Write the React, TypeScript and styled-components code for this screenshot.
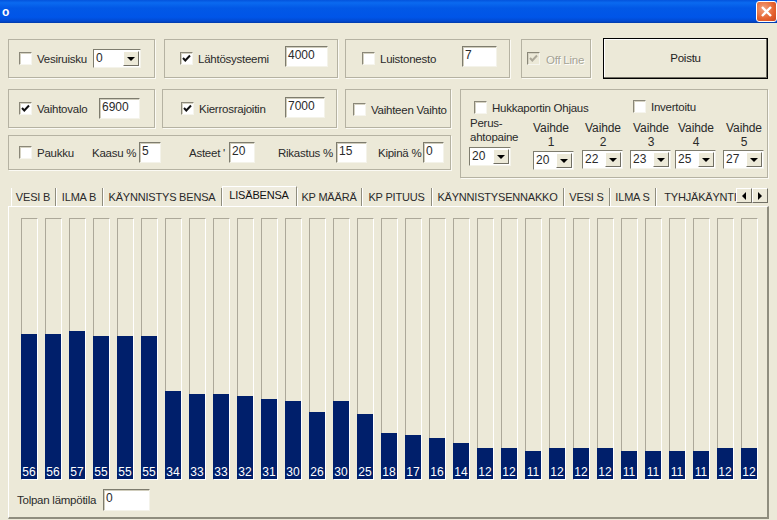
import React from 'react';
import styled, { createGlobalStyle } from 'styled-components';

const Global = createGlobalStyle`
	html, body {
		margin: 0;
		padding: 0;
		background: #ece9d8;
	}
	* {
		box-sizing: border-box;
	}
`

const Win = styled.div`
	width: 777px;
	height: 520px;
	overflow: hidden;
	background: #ece9d8;
	font-family: 'Liberation Sans', Arial, sans-serif;
	font-size: 11.5px;
	letter-spacing: -0.25px;
	color: #2a2a2a;
`
const TitleBar = styled.div`
	height: 23px;
	display: flex;
	align-items: center;
	justify-content: space-between;
	padding: 0 0 0 2px;
	background: linear-gradient(180deg, #0453dc 0%, #0a6af0 12%, #0258e6 35%, #0055e8 75%, #0249d0 92%, #013aa8 100%);
	color: #fff;
	font-weight: bold;
	font-size: 12px;
`
const CloseBtn = styled.div`
	width: 21px;
	height: 21px;
	margin-top: -1px;
	border: 1px solid #fff;
	border-radius: 3px;
	background: radial-gradient(circle at 35% 35%, #f2a27e, #e5622e 60%, #cc441c);
	display: flex;
	align-items: center;
	justify-content: center;
`
const Content = styled.div`
	padding: 16px 8px 0;
`
const Row = styled.div`
	display: flex;
	align-items: flex-start;
`
const Group = styled.div<{ $w: number; $h?: number; $ml?: number }>`
	width: ${p => p.$w}px;
	height: ${p => p.$h || 39}px;
	margin-left: ${p => p.$ml || 0}px;
	border: 1px solid #b5b2a2;
	box-shadow: 1px 1px 0 #fbfaf4;
	display: flex;
	align-items: center;
	flex-shrink: 0;
`
const Poistu = styled.button`
	width: 165px;
	height: 41px;
	margin-left: 12px;
	margin-top: -1px;
	background: #ece9d8;
	border: 1px solid #000;
	box-shadow: inset -1px -1px 0 #716f64, inset 1px 1px 0 #fff;
	font: inherit;
	letter-spacing: inherit;
	color: #222;
	padding: 0 0 2px;
`
const Check = styled.span<{ $off?: boolean; $ml: number; $mt?: number }>`
	width: 13px;
	height: 13px;
	margin-left: ${p => p.$ml}px;
	margin-top: ${p => p.$mt || 0}px;
	flex-shrink: 0;
	background: ${p => (p.$off ? '#ece9d8' : '#fff')};
	border-top: 1px solid #8a8778;
	border-left: 1px solid #8a8778;
	border-right: 1px solid #f6f5ee;
	border-bottom: 1px solid #f6f5ee;
	box-shadow: inset 1px 1px 0 #d6d3c3;
	display: flex;
	align-items: center;
	justify-content: center;
`
const Label = styled.span<{ $ml: number; $w?: number; $mt?: number; $off?: boolean }>`
	margin-left: ${p => p.$ml}px;
	margin-top: ${p => p.$mt || 0}px;
	${p => (p.$w ? `width: ${p.$w}px;` : '')}
	flex-shrink: 0;
	white-space: nowrap;
	color: ${p => (p.$off ? '#a5a394' : 'inherit')};
	${p => (p.$off ? 'text-shadow: 1px 1px 0 #fff;' : '')}
`
const Field = styled.div<{ $w: number; $h?: number; $ml: number; $mt?: number }>`
	width: ${p => p.$w}px;
	height: ${p => p.$h || 21}px;
	margin-left: ${p => p.$ml}px;
	margin-top: ${p => p.$mt || 0}px;
	flex-shrink: 0;
	background: #fff;
	border-top: 1px solid #7e7c6e;
	border-left: 1px solid #7e7c6e;
	border-right: 1px solid #f4f3ea;
	border-bottom: 1px solid #f4f3ea;
	box-shadow: inset 1px 1px 0 #d0cdbc;
	padding: 1px 0 0 2px;
	font-size: 12px;
	letter-spacing: 0;
	line-height: 14px;
`
const ComboBox = styled.div<{ $w: number; $ml?: number }>`
	width: ${p => p.$w}px;
	height: 19px;
	margin-left: ${p => p.$ml || 0}px;
	flex-shrink: 0;
	background: #fff;
	border-top: 1px solid #7e7c6e;
	border-left: 1px solid #7e7c6e;
	border-right: 1px solid #f4f3ea;
	border-bottom: 1px solid #f4f3ea;
	display: flex;
	justify-content: space-between;
	padding: 1px 1px 1px 2px;
	font-size: 12px;
	letter-spacing: 0;
	line-height: 15px;
`
const ComboBtn = styled.span`
	width: 16px;
	background: #ece9d8;
	border-right: 1px solid #716f64;
	border-bottom: 1px solid #716f64;
	border-top: 1px solid #fff;
	border-left: 1px solid #fff;
	display: flex;
	align-items: center;
	justify-content: center;
	&::after {
		content: '';
		border-left: 4px solid transparent;
		border-right: 4px solid transparent;
		border-top: 4px solid #000;
	}
`
const LowerRow = styled.div`
	display: flex;
	align-items: flex-start;
	margin-top: 10px;
`
const LeftStack = styled.div`
	display: flex;
	flex-direction: column;
	gap: 7px;
`
const BoostGroup = styled.div`
	width: 308px;
	height: 89px;
	margin-left: 9px;
	border: 1px solid #b5b2a2;
	box-shadow: 1px 1px 0 #fbfaf4;
	display: flex;
	flex-direction: column;
`
const BoostHead = styled.div`
	height: 29px;
	display: flex;
	align-items: center;
`
const BoostCols = styled.div`
	display: flex;
	padding-left: 8px;
`
const GearCol = styled.div<{ $w: number; $ml: number }>`
	width: ${p => p.$w}px;
	margin-left: ${p => p.$ml}px;
	display: flex;
	flex-direction: column;
	align-items: center;
	height: 50px;
	line-height: 14px;
	text-align: center;
	font-size: 12px;
	letter-spacing: -0.1px;
	flex-shrink: 0;
`
const BaseCol = styled(GearCol)`
	align-items: flex-start;
	text-align: left;
	margin-top: -3px;
	font-size: 11.5px;
	letter-spacing: -0.25px;
`
const GearText = styled.div<{ $drop?: number; $shift?: number }>`
	height: 31px;
	padding-top: 2px;
	padding-left: 1px;
	margin-bottom: ${p => p.$drop || 0}px;
	${p => (p.$shift ? `margin-left: ${p.$shift}px;` : '')}
`
const BaseText = styled(GearText)`
	padding-top: 0;
	height: 31px;
`
const TabStrip = styled.div`
	display: flex;
	align-items: flex-end;
	height: 20px;
	margin-top: 8px;
	padding-left: 3px;
`
const TabList = styled.div`
	width: 725px;
	height: 20px;
	display: flex;
	align-items: flex-end;
	overflow: hidden;
	flex-shrink: 0;
`
const Tab = styled.div<{ $w: number; $active?: boolean }>`
	width: ${p => p.$w}px;
	flex-shrink: 0;
	height: ${p => (p.$active ? 20 : 18)}px;
	display: flex;
	align-items: center;
	justify-content: center;
	white-space: nowrap;
	font-size: 11px;
	letter-spacing: -0.2px;
	line-height: 16px;
	background: ${p => (p.$active ? '#efecdf' : '#ece9d8')};
	border-right: 1px solid #8f8d7e;
	box-shadow: inset 1px 0 0 #fff;
	padding-bottom: ${p => (p.$active ? 3 : 0)}px;
	${p => (p.$active ? 'border-top: 1px solid #fff; color: #111;' : '')}
`
const ScrollBtn = styled.span<{ $dir: 'l' | 'r' }>`
	width: 16px;
	height: 15px;
	margin-bottom: 3px;
	flex-shrink: 0;
	background: #ece9d8;
	border-top: 1px solid #fff;
	border-left: 1px solid #fff;
	border-right: 1px solid #716f64;
	border-bottom: 1px solid #716f64;
	display: flex;
	align-items: center;
	justify-content: center;
	&::after {
		content: '';
		border-top: 4px solid transparent;
		border-bottom: 4px solid transparent;
		${p => (p.$dir === 'l' ? 'border-right: 4px solid #000;' : 'border-left: 4px solid #000;')}
	}
`
const Panel = styled.div`
	width: 761px;
	height: 313px;
	border-top: 1px solid #fff;
	border-left: 1px solid #fff;
	border-right: 2px solid #8f8d7e;
	border-bottom: 2px solid #8f8d7e;
	padding: 11px 0 0 12px;
`
const Bars = styled.div`
	display: flex;
	gap: 7px;
	height: 262px;
`
const Track = styled.div`
	width: 17px;
	height: 262px;
	display: flex;
	flex-direction: column;
	justify-content: flex-end;
	background: #ece9d8;
	border-top: 1px solid #aca899;
	border-left: 1px solid #aca899;
	border-right: 1px solid #fff;
	border-bottom: 1px solid #fff;
`
const Fill = styled.div`
	margin-left: -1px;
	background: #001f6b;
	color: #fff;
	font-size: 12px;
	letter-spacing: 0;
	line-height: 14px;
	display: flex;
	align-items: flex-end;
	justify-content: center;
`
const TempRow = styled.div`
	display: flex;
	align-items: center;
	margin-top: 9px;
	margin-left: -4px;
`

const Tick = ({ off }: { off?: boolean }) => (
	<svg width="9" height="9" viewBox="0 0 9 9">
		<path d="M1 4 L3.3 6.5 L8 1.5" fill="none" stroke={off ? '#aca899' : '#111'} strokeWidth="2" />
	</svg>
)

const CheckBox = ({ on, off, ml, mt }: { on?: boolean; off?: boolean; ml: number; mt?: number }) => (
	<Check $off={off} $ml={ml} $mt={mt}>
		{on && <Tick off={off} />}
	</Check>
)

const Combo = ({ v, w, ml }: { v: string; w: number; ml?: number }) => (
	<ComboBox $w={w} $ml={ml}>
		{v}
		<ComboBtn />
	</ComboBox>
)

const tabs: [string, number, boolean?][] = [
	['VESI B', 45],
	['ILMA B', 47],
	['KÄYNNISTYS BENSA', 119],
	['LISÄBENSA', 75, true],
	['KP MÄÄRÄ', 65],
	['KP PITUUS', 70],
	['KÄYNNISTYSENNAKKO', 132],
	['VESI S', 46],
	['ILMA S', 46],
	['TYHJÄKÄYNTI', 90],
]

const values = [56, 56, 57, 55, 55, 55, 34, 33, 33, 32, 31, 30, 26, 30, 25, 18, 17, 16, 14, 12, 12, 11, 12, 12, 12, 11, 11, 11, 11, 12, 12]

// arvo, vasen marginaali
const gears: [string, number][] = [
	['20', 21],
	['22', 8],
	['23', 7],
	['25', 4],
	['27', 7],
]

const App = () => {
	return (
		<React.Fragment>
			<Global />
			<Win>
				<TitleBar>
					o
					<CloseBtn>
						<svg width="13" height="13" viewBox="0 0 13 13">
							<path d="M2 2 L11 11 M11 2 L2 11" stroke="#fff" strokeWidth="2.4" />
						</svg>
					</CloseBtn>
				</TitleBar>
				<Content>
					<Row>
						<Group $w={147}>
							<CheckBox ml={10} />
							<Label $ml={5} $w={53}>Vesiruisku</Label>
							<Combo v="0" w={48} ml={3} />
						</Group>
						<Group $w={174} $ml={9}>
							<CheckBox on ml={15} />
							<Label $ml={5} $w={87} $mt={1}>Lähtösysteemi</Label>
							<Field $w={43} $ml={0} $mt={-4}>4000</Field>
						</Group>
						<Group $w={165} $ml={7}>
							<CheckBox ml={16} />
							<Label $ml={5} $w={82} $mt={1}>Luistonesto</Label>
							<Field $w={35} $ml={0} $mt={-4}>7</Field>
						</Group>
						<Group $w={70} $ml={11}>
							<CheckBox on off ml={5} />
							<Label $off $ml={6} $mt={2}>Off Line</Label>
						</Group>
						<Poistu>Poistu</Poistu>
					</Row>
					<LowerRow>
						<LeftStack>
							<Row>
								<Group $w={147}>
									<CheckBox on ml={10} />
									<Label $ml={5} $w={62}>Vaihtovalo</Label>
									<Field $w={41} $ml={0}>6900</Field>
								</Group>
								<Group $w={175} $ml={7}>
									<CheckBox on ml={18} />
									<Label $ml={5} $w={86}>Kierrosrajoitin</Label>
									<Field $w={40} $ml={0} $mt={-2}>7000</Field>
								</Group>
								<Group $w={106} $ml={8}>
									<CheckBox ml={7} mt={2} />
									<Label $ml={5} $mt={2}>Vaihteen Vaihto</Label>
								</Group>
							</Row>
							<Group $w={443} $h={35}>
								<CheckBox ml={10} />
								<Label $ml={5} $w={55}>Paukku</Label>
								<Label $ml={0} $w={47} $mt={1}>Kaasu %</Label>
								<Field $w={22} $ml={0}>5</Field>
								<Label $ml={28} $w={40} $mt={1}>Asteet '</Label>
								<Field $w={26} $ml={0}>20</Field>
								<Label $ml={23} $w={58} $mt={1}>Rikastus %</Label>
								<Field $w={31} $ml={0}>15</Field>
								<Label $ml={11} $w={45} $mt={1}>Kipinä %</Label>
								<Field $w={21} $ml={0}>0</Field>
							</Group>
						</LeftStack>
						<BoostGroup>
							<BoostHead>
								<CheckBox ml={13} mt={6} />
								<Label $ml={5} $w={141} $mt={6}>Hukkaportin Ohjaus</Label>
								<CheckBox ml={0} mt={4} />
								<Label $ml={5} $mt={4}>Invertoitu</Label>
							</BoostHead>
							<BoostCols>
								<BaseCol $w={43} $ml={0}>
									<BaseText>Perus-<br />ahtopaine</BaseText>
									<Combo v="20" w={42} />
								</BaseCol>
								{gears.map(([v, ml], i) => (
									<GearCol key={i} $w={41} $ml={ml}>
										<GearText $drop={i === 0 ? 2 : 0} $shift={i === 0 ? -6 : 0}>Vaihde<br />{i + 1}</GearText>
										<Combo v={v} w={41} />
									</GearCol>
								))}
							</BoostCols>
						</BoostGroup>
					</LowerRow>
					<TabStrip>
						<TabList>
							{tabs.map(([name, w, active]) => (
								<Tab key={name} $w={w} $active={active}>{name}</Tab>
							))}
						</TabList>
						<ScrollBtn $dir="l" />
						<ScrollBtn $dir="r" />
					</TabStrip>
					<Panel>
						<Bars>
							{values.map((v, i) => (
								<Track key={i}>
									<Fill style={{ height: Math.floor(v * 2.6) }}>{v}</Fill>
								</Track>
							))}
						</Bars>
						<TempRow>
							<Label $ml={0} $w={86}>Tolpan lämpötila</Label>
							<Field $w={47} $h={22} $ml={0}>0</Field>
						</TempRow>
					</Panel>
				</Content>
			</Win>
		</React.Fragment>
	);
};

export default App;
